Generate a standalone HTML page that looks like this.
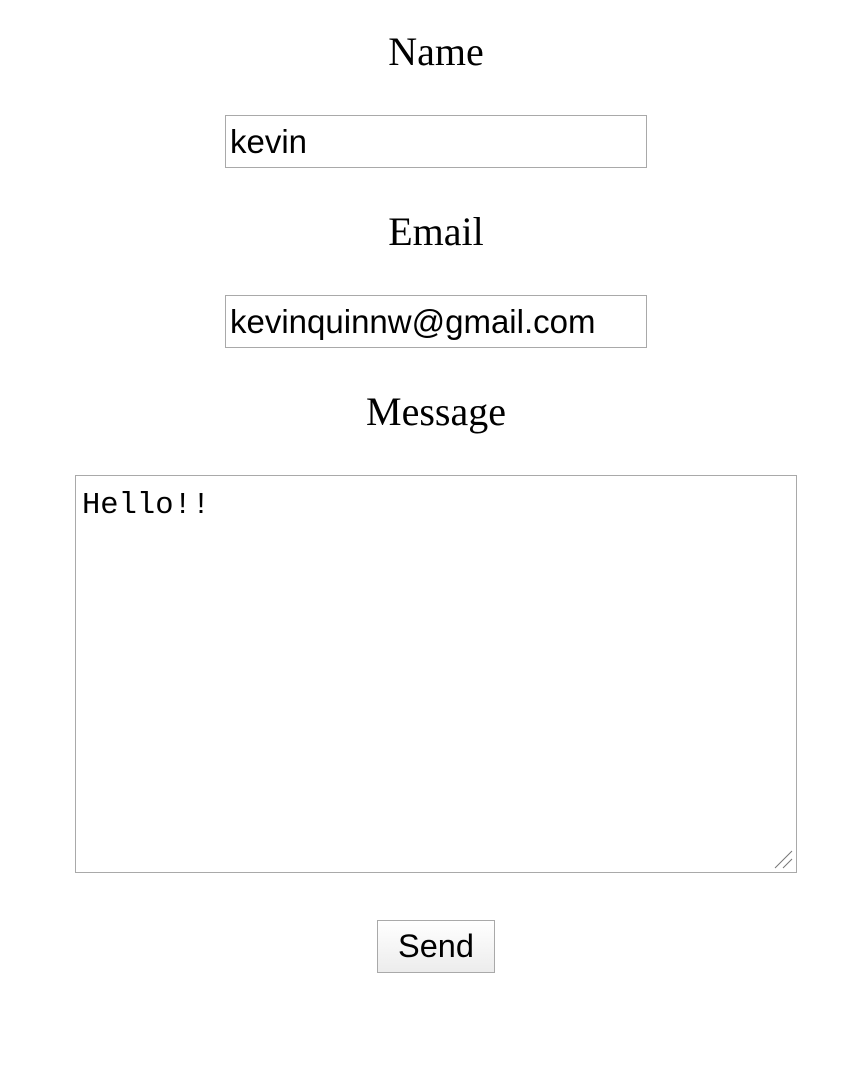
<!DOCTYPE html>
<html><head><style>
body{margin:0;width:842px;height:1091px;background:#fff;position:relative;overflow:hidden}
.l{position:absolute;left:0;width:872px;text-align:center;font-family:"Liberation Serif",serif;font-size:40px;color:#000;line-height:40px}
.i{position:absolute;border:1px solid #a9a9a9;box-sizing:border-box;font-family:"Liberation Sans",sans-serif;font-size:33px;padding-left:4px;line-height:51px;color:#000}
.t{position:absolute;left:75px;top:475px;width:722px;height:398px;border:1px solid #a9a9a9;box-sizing:border-box;font-family:"Liberation Mono",monospace;font-size:30.5px;padding:12px 6px;color:#000;line-height:36px}
.b{position:absolute;left:377px;top:920px;width:118px;height:53px;border:1px solid #a9a9a9;box-sizing:border-box;background:linear-gradient(#fff,#ececec);font-family:"Liberation Sans",sans-serif;font-size:32.5px;text-align:center;line-height:50px}
</style></head><body>
<div class="l" style="top:32px">Name</div>
<div class="i" style="left:225px;top:115px;width:422px;height:53px">kevin</div>
<div class="l" style="top:212px">Email</div>
<div class="i" style="left:225px;top:295px;width:422px;height:53px">kevinquinnw@gmail.com</div>
<div class="l" style="top:392px">Message</div>
<div class="t">Hello!!
<svg style="position:absolute;right:3px;bottom:3px" width="20" height="20"><path d="M2 19L19 2M10 19L19 10" stroke="#777" stroke-width="1"/></svg></div>
<div class="b">Send</div>
</body></html>
